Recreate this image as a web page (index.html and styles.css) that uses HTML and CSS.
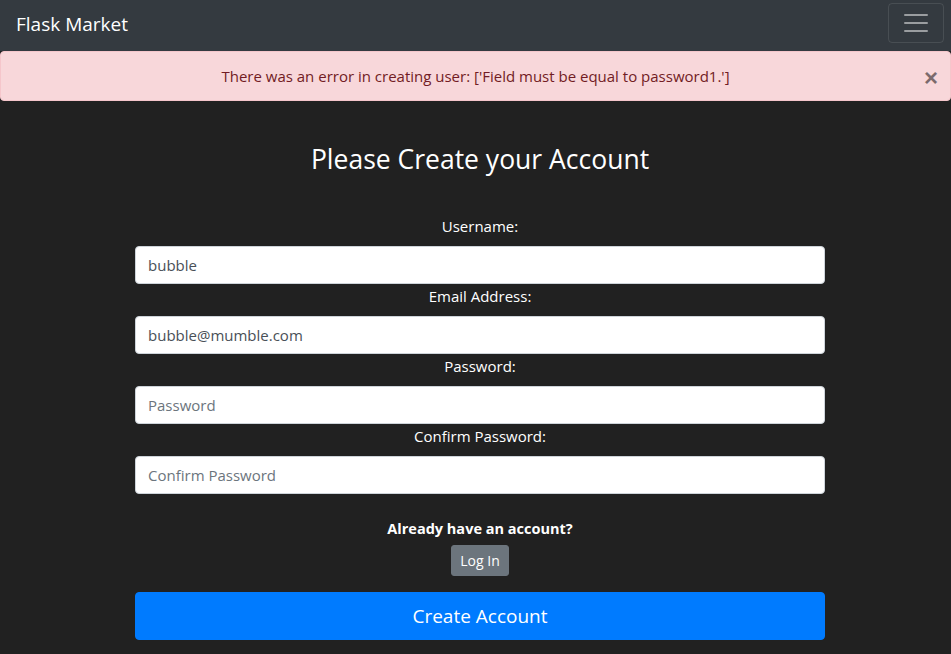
FILE: index.html
```html
<!DOCTYPE html>
<html lang="en">
<head>
<meta charset="utf-8">
<title>Flask Market</title>
<link rel="stylesheet" href="styles.css">
</head>
<body>
<nav class="navbar">
  <a class="brand" href="#">Flask Market</a>
  <button class="toggler" type="button" aria-label="Toggle navigation">
    <svg width="30" height="30" viewBox="0 0 30 30"><path stroke="rgba(255,255,255,0.5)" stroke-linecap="round" stroke-miterlimit="10" stroke-width="2" d="M4 7h22M4 15h22M4 23h22"/></svg>
  </button>
</nav>
<div class="alert">
  <span>There was an error in creating user: ['Field must be equal to password1.']</span>
  <button class="close" type="button" aria-label="Close">&times;</button>
</div>
<main class="page">
  <form class="form">
    <h1 class="title">Please Create your Account</h1>
    <label class="label" for="u">Username:</label>
    <input class="control" id="u" type="text" value="bubble">
    <label class="label" for="e">Email Address:</label>
    <input class="control" id="e" type="text" value="bubble@mumble.com">
    <label class="label" for="p1">Password:</label>
    <input class="control" id="p1" type="password" placeholder="Password">
    <label class="label" for="p2">Confirm Password:</label>
    <input class="control" id="p2" type="password" placeholder="Confirm Password">
    <div class="login">
      <h6 class="login-text">Already have an account?</h6>
      <a class="btn-secondary" href="#">Log In</a>
    </div>
    <button class="btn-primary" type="button">Create Account</button>
  </form>
</main>
</body>
</html>
```

FILE: styles.css
```css
* { box-sizing: border-box; }
html, body { margin: 0; padding: 0; }
body {
  background: #212121;
  color: #ffffff;
  font-family: "Open Sans", "Noto Sans", sans-serif;
  font-size: 15px;
  line-height: 1.5;
}
.navbar {
  height: 51px;
  background: #343a40;
  display: flex;
  align-items: center;
  justify-content: space-between;
  padding: 0 7px 6px 16px;
}
.brand {
  color: #fff;
  text-decoration: none;
  font-size: 19px;
  line-height: 30px;
  padding-top: 3px;
}
.toggler {
  width: 56px;
  height: 40px;
  background: transparent;
  border: 1px solid rgba(255,255,255,0.1);
  border-radius: 4px;
  display: flex;
  align-items: center;
  justify-content: center;
  padding: 0;
}
.alert {
  height: 50px;
  background: #f8d7da;
  border: 1px solid #f5c6cb;
  border-radius: 4px;
  color: #721c24;
  display: flex;
  align-items: center;
  justify-content: center;
  position: relative;
  padding-top: 1px;
}
.close {
  position: absolute;
  right: 12px;
  top: 14px;
  background: transparent;
  border: 0;
  padding: 0;
  font-size: 24px;
  font-weight: 700;
  line-height: 24px;
  color: #000;
  opacity: 0.5;
  font-family: "Liberation Sans", sans-serif;
}
.page {
  display: flex;
  justify-content: center;
  padding: 43px 0 0 9px;
}
.form {
  width: 690px;
  display: flex;
  flex-direction: column;
  align-items: stretch;
  text-align: center;
}
.title {
  margin: 0 0 38px;
  font-size: 26.5px;
  font-weight: 400;
  line-height: 1.2;
}
.label {
  display: block;
  line-height: 24px;
  margin-bottom: 8px;
  font-size: 15px;
}
.control {
  display: block;
  width: 100%;
  height: 38px;
  padding: 6px 12px;
  border: 1px solid #ced4da;
  border-radius: 4px;
  background: #fff;
  color: #495057;
  font: inherit;
  font-size: 15px;
}
.control::placeholder { color: #6c757d; opacity: 1; }
.login {
  display: flex;
  flex-direction: column;
  align-items: center;
  margin-top: 26px;
}
.login-text {
  margin: 0 0 8px;
  font-size: 14.5px;
  font-weight: 700;
  line-height: 1.2;
}
.btn-secondary {
  display: inline-block;
  background: #6c757d;
  color: #fff;
  text-decoration: none;
  font-size: 14px;
  line-height: 21px;
  padding: 4px 8px;
  border: 1px solid #6c757d;
  border-radius: 3px;
}
.btn-primary {
  margin-top: 16px;
  height: 48px;
  background: #007bff;
  border: 1px solid #007bff;
  border-radius: 4px;
  color: #fff;
  font: inherit;
  font-size: 19px;
}
```
